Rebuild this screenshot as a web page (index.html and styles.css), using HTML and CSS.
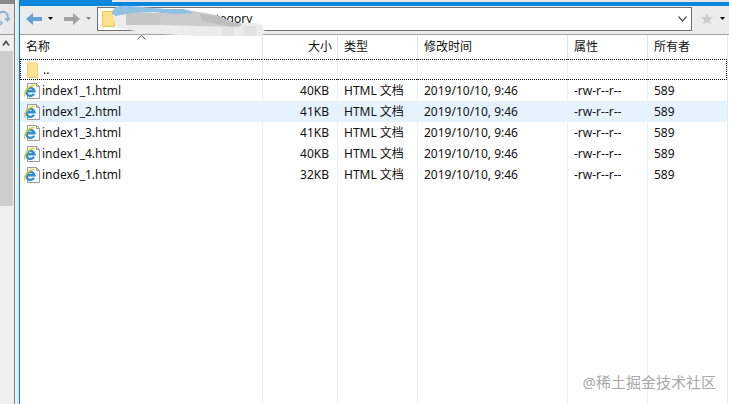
FILE: index.html
```html
<!DOCTYPE html>
<html lang="zh-CN">
<head>
<meta charset="utf-8">
<title>category</title>
<link rel="stylesheet" href="styles.css">
</head>
<body>
<aside class="side">
  <div class="side-top">
    <button class="refresh" aria-label="刷新"><svg width="11" height="18" viewBox="0 0 11 18"><path d="M0 4C4 1 8 4 8 9" fill="none" stroke="#86b3d6" stroke-width="2"/><path d="M4 9h7l-3.500 4z" fill="#86b3d6"/><path d="M0 12l2 2-2 2" fill="none" stroke="#86b3d6" stroke-width="1.500"/></svg></button>
  </div>
  <div class="scroll">
    <button class="scroll-up" aria-label="向上滚动"><svg width="8" height="7" viewBox="0 0 8 7"><path d="M1 5.500l3-4 3 4" fill="none" stroke="#4c4c4c" stroke-width="1.700"/></svg></button>
    <div class="thumb"></div>
  </div>
</aside>
<main class="panel">
  <div class="strip"><div class="tab"></div></div>
  <div class="toolbar">
    <button class="nav" aria-label="后退"><svg width="16" height="12" viewBox="0 0 16 12"><path d="M0 6l7-6v4h9v4H7v4z" fill="#62a1d6"/></svg></button>
    <button class="drop" aria-label="后退历史"><svg width="5" height="3" viewBox="0 0 5 3"><path d="M0 0h5L2.500 3z" fill="#000"/></svg></button>
    <button class="nav next" aria-label="前进"><svg width="16" height="12" viewBox="0 0 16 12"><path d="M16 6L9 0v4H0v4h9v4z" fill="#a2a2a2"/></svg></button>
    <button class="drop" aria-label="前进历史"><svg width="5" height="3" viewBox="0 0 5 3"><path d="M0 0h5L2.500 3z" fill="#858585"/></svg></button>
    <div class="address">
      <svg class="folder" width="13" height="16" viewBox="0 0 13 16"><path d="M0 0h13v16H0z" fill="#ffe08a"/><path d="M.5.500h12v15H.500z" fill="none" stroke="#edc65b"/></svg>
      <input class="path" aria-label="路径" value="category">
      <button class="open" aria-label="展开"><svg width="9" height="6" viewBox="0 0 9 6"><path d="M.5.500l4 4.500 4-4.500" fill="none" stroke="#555" stroke-width="1.200"/></svg></button>
      <svg class="smudge" width="162" height="33" viewBox="0 0 162 33">
        <path d="M9 8L50 5 84 6 112 13 130 18 152 18 158 20 161 27 158 31 90 31 45 28 12 23 10 15z" fill="#ececec"/>
        <path d="M22 8H56V20H22z" fill="#c6c6c6"/>
        <path d="M56 6L84 5 112 10 128 17 138 19 136 22 56 20z" fill="#cccccc"/>
        <path d="M96 9L112 11 128 17 138 19 130 22 98 16z" fill="#bdbdbd"/>
        <path d="M8 9C8 2 14 0 26 1L62 4 80 4 90 8 70 9 50 7 28 8 12 11z" fill="#90c0e4"/>
        <path d="M118 22h12v9h-12zM140 21h12v10h-12z" fill="#e2e2e2"/>
      </svg>
    </div>
    <button class="star" aria-label="收藏"><svg width="12" height="12" viewBox="0 0 12 12"><path d="M6 0l1.700 4H12L8.700 7 10 11.500 6 9l-4 2.500L3.300 7 0 4h4.300z" fill="#cbcbcb"/></svg></button>
    <button class="drop last" aria-label="收藏列表"><svg width="5" height="3" viewBox="0 0 5 3"><path d="M0 0h5L2.500 3z" fill="#000"/></svg></button>
  </div>
  <div class="list">
    <svg class="sort" width="9" height="5" viewBox="0 0 9 5"><path d="M.5 4.500l4-4 4 4" fill="none" stroke="#555"/></svg>
    <table class="files">
      <colgroup><col><col class="c-size"><col class="c-type"><col class="c-date"><col class="c-attr"><col class="c-owner"></colgroup>
      <thead><tr><th>名称</th><th class="num">大小</th><th>类型</th><th>修改时间</th><th>属性</th><th>所有者</th></tr></thead>
      <tbody>
        <tr class="parent"><td><span class="name"><svg class="icon" width="16" height="16" viewBox="0 0 16 16"><path d="M2 0h10l1 2v14H2z" fill="#ffe391"/><path d="M2.500.500v15h10V3" fill="none" stroke="#efcd69"/></svg>..</span></td><td></td><td></td><td></td><td></td><td></td></tr>
        <tr><td><span class="name"><svg class="icon" width="16" height="16" viewBox="0 0 16 16"><use href="#ie"/></svg>index1_1.html</span></td><td class="num">40KB</td><td>HTML 文档</td><td>2019/10/10, 9:46</td><td>-rw-r--r--</td><td>589</td></tr>
        <tr class="hover"><td><span class="name"><svg class="icon" width="16" height="16" viewBox="0 0 16 16"><use href="#ie"/></svg>index1_2.html</span></td><td class="num">41KB</td><td>HTML 文档</td><td>2019/10/10, 9:46</td><td>-rw-r--r--</td><td>589</td></tr>
        <tr><td><span class="name"><svg class="icon" width="16" height="16" viewBox="0 0 16 16"><use href="#ie"/></svg>index1_3.html</span></td><td class="num">41KB</td><td>HTML 文档</td><td>2019/10/10, 9:46</td><td>-rw-r--r--</td><td>589</td></tr>
        <tr><td><span class="name"><svg class="icon" width="16" height="16" viewBox="0 0 16 16"><use href="#ie"/></svg>index1_4.html</span></td><td class="num">40KB</td><td>HTML 文档</td><td>2019/10/10, 9:46</td><td>-rw-r--r--</td><td>589</td></tr>
        <tr><td><span class="name"><svg class="icon" width="16" height="16" viewBox="0 0 16 16"><use href="#ie"/></svg>index6_1.html</span></td><td class="num">32KB</td><td>HTML 文档</td><td>2019/10/10, 9:46</td><td>-rw-r--r--</td><td>589</td></tr>
        <tr class="rest"><td></td><td></td><td></td><td></td><td></td><td></td></tr>
      </tbody>
    </table>
  </div>
</main>
<div class="mark">@稀土掘金技术社区</div>
<svg class="defs" width="0" height="0"><defs><g id="ie">
  <path d="M3.500.500h9l3 3v12h-12z" fill="#fafafa" stroke="#9a9a9a"/>
  <path d="M12.500.500v3h3" fill="none" stroke="#9a9a9a"/>
  <path d="M10 10.800A4 4 0 1 1 10.400 8.200H3" fill="none" stroke="#2f8fd0" stroke-width="2.400"/>
  <path d="M1.200 13.500C-1 11 3 3 10.500 2.300" fill="none" stroke="#e3cf3c" stroke-width="1.500"/>
</g></defs></svg>
</body>
</html>
```

FILE: styles.css
```css
* { box-sizing: border-box; }
html, body { height: 100%; }
body {
  margin: 0;
  display: flex;
  overflow: hidden;
  background: #f0f0f0;
  color: #111;
  font: 12px/16px "Noto Sans", "Noto Sans CJK SC", sans-serif;
}
button { display: flex; align-items: center; justify-content: center; padding: 0; border: 0; background: none; }
svg { display: block; flex: none; }

.side { display: flex; flex-direction: column; flex: none; width: 15px; border-right: 1px solid #7c7c7c; }
.side-top { height: 35px; border-top: 4px solid #8a8a8a; border-bottom: 1px solid #999; background: #e9e9e9; }
.refresh { height: 28px; }
.scroll { flex: 1; width: 13px; background: #f0f0f0; }
.scroll-up { width: 12px; height: 16px; }
.thumb { height: 155px; background: #cdcdcd; }

.panel {
  display: flex;
  flex-direction: column;
  flex: 1;
  min-width: 0;
  margin-left: 4px;
  border-left: 1px solid #147cb4;
  box-shadow: -2px 0 #cdeaf5;
  background: #fff;
}
.strip { display: flex; justify-content: flex-end; height: 6px; background: #0a86dc; }
.tab { width: calc(100% - 92px); height: 2px; background: #e6e6e6; }
.toolbar { display: flex; align-items: center; height: 29px; padding: 0 4px 3px 6px; border-bottom: 1px solid #a3a3a3; background: #ececec; }
.nav { width: 16px; height: 24px; }
.next { margin-left: 5px; }
.drop { width: 17px; height: 24px; }
.address { position: relative; display: flex; align-items: center; flex: 1; height: 24px; margin-right: 9px; padding: 0 4px; border: 1px solid #717171; background: #fff; }
.path { flex: 1; min-width: 0; height: 20px; padding: 0 0 0 88px; border: 0; outline: 0; background: none; color: #111; font: inherit; }
.open { width: 9px; height: 20px; }
.smudge { position: absolute; left: 6px; top: -3px; }
.last { width: 5px; margin-left: 7px; }

.list { position: relative; flex: 1; padding-right: 1px; }
.sort { position: absolute; left: 117px; top: 0; }
.files { width: 100%; height: 100%; border-collapse: separate; border-spacing: 0; table-layout: fixed; border-right: 1px solid #e8e8e8; }
.c-size { width: 75px; }
.c-type, .c-attr, .c-owner { width: 80px; }
.c-date { width: 150px; }
th, td { height: 21px; padding: 0 6px; border-left: 1px solid #eaf1f4; text-align: left; font-weight: 400; white-space: nowrap; }
th { height: 24px; border-color: #e2e2e2; }
th:first-child, td:first-child { border-left: 0; }
td:first-child { padding-left: 4px; }
.num { padding-right: 8px; text-align: right; }
th.num { padding-right: 5px; }
.name { display: flex; align-items: center; gap: 2px; }
.hover td { background: #e5f3fe; }
.parent td { border-top: 1px dotted #000; border-bottom: 1px dotted #000; }
.parent td:first-child { border-left: 1px dotted #000; }
.parent td:last-child { border-right: 1px dotted #000; }
.rest td { height: auto; }

.mark { position: absolute; right: 13px; bottom: 12px; color: #a8a8a8; font-size: 15px; line-height: 20px; }
.defs { position: absolute; }
```
